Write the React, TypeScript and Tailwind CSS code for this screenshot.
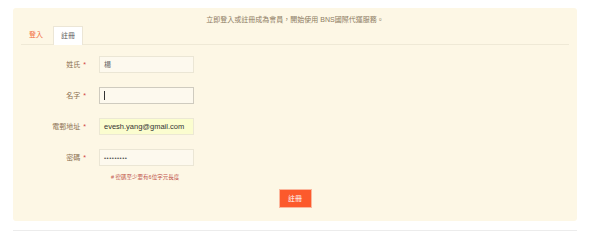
import React from 'react';

const font = { fontFamily: '"Liberation Sans", "Noto Sans CJK TC", sans-serif' };

interface Field {
  label: string;
  value: string;
  kind: 'text' | 'focus' | 'email' | 'password';
}

const fields: Field[] = [
  { label: '姓氏', value: '楊', kind: 'text' },
  { label: '名字', value: '', kind: 'focus' },
  { label: '電郵地址', value: 'evesh.yang@gmail.com', kind: 'email' },
  { label: '密碼', value: '•••••••••', kind: 'password' },
];

const FormRow: React.FC<{ field: Field }> = ({ field }) => {
  const box =
    field.kind === 'email'
      ? 'bg-[#fbfdcf] border-[#ece8d4]'
      : field.kind === 'focus'
      ? 'bg-[#fdf9ee] border-[#cfcbbf]'
      : 'bg-[#fdf9ee] border-[#ebe6d5]';
  return (
    <div className="flex items-center h-[17px]">
      <div className="w-[73px] flex justify-end items-center text-[7px] leading-[10px] text-[#8a6f50]">
        <span>{field.label}</span>
        <span className="ml-[3px] text-[#d0453e]">*</span>
      </div>
      <div className={`ml-[13px] w-[95px] h-[17px] border flex items-center pl-[4px] ${box}`}>
        {field.kind === 'focus' ? (
          <span className="block w-px h-[9px] bg-[#333]" />
        ) : field.kind === 'password' ? (
          <span className="text-[6px] leading-[8px] tracking-[0.5px] text-[#555]">{field.value}</span>
        ) : (
          <span className={`leading-[10px] text-[#333] ${field.kind === 'email' ? 'text-[7.5px]' : 'text-[7px] text-[#666]'}`}>
            {field.value}
          </span>
        )}
      </div>
    </div>
  );
};

export default function App() {
  return (
    <div className="w-[600px] h-[247px] bg-white pt-[8px] px-[13px]" style={font}>
      <div className="w-[564px] h-[213px] bg-[#fdf7e5] rounded-[3px] flex flex-col">
        <div className="pt-[7px] text-center text-[7px] leading-[10px] text-[#8c7b62]">
          立即登入或註冊成為會員，開始使用 BNS國際代運服務。
        </div>

        <div className="mt-[1px] mx-[8px] h-[19px] flex border-b border-[#efe9d6]">
          <div className="pl-[8px] pr-[10px] flex items-center text-[7px] text-[#f26b3a]">登入</div>
          <div className="px-[7px] flex items-center bg-white border border-b-0 border-[#ece6d6] -mb-px text-[7px] text-[#555]">
            註冊
          </div>
        </div>

        <div className="mt-[11px] flex flex-col gap-[14px]">
          {fields.map((f) => (
            <FormRow key={f.label} field={f} />
          ))}
        </div>

        <div className="mt-[7px] ml-[98px] text-[5.5px] leading-[8px] text-[#c0524a]"># 密碼至少要有6位字元長度</div>

        <div className="mt-[8px] flex justify-center">
          <button className="w-[33px] h-[19px] bg-[#fc5a2c] border border-[#fbb79d] text-white text-[7px] leading-none">
            註冊
          </button>
        </div>
      </div>
      <div className="mt-[9px] h-px w-[564px] bg-[#ececec]" />
    </div>
  );
}
